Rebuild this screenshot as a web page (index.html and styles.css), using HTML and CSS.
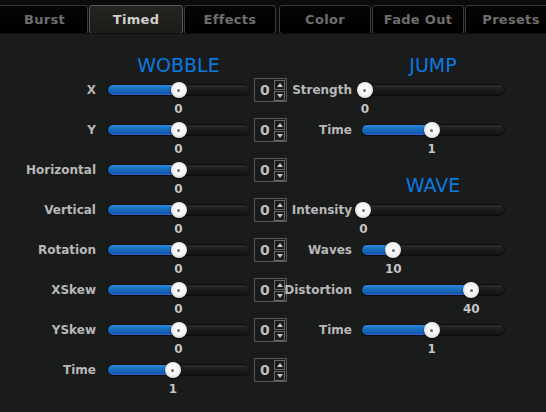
FILE: index.html
```html
<!DOCTYPE html>
<html lang="en">
<head>
  <meta charset="UTF-8" />
  <title>Timed</title>
  <link rel="stylesheet" href="styles.css">
</head>
<body>
  <div class="tabs">
    <div class="tab first">Burst</div>
    <div class="tab active">Timed</div>
    <div class="tab">Effects</div>
    <div class="tab">Color</div>
    <div class="tab">Fade Out</div>
    <div class="tab">Presets</div>
  </div>

  <div class="panel">
    <div class="col left">
      <h2 class="head">WOBBLE</h2>
      <div class="row">
        <span class="label">X</span>
        <div class="slider"><div class="fill" style="width:50%"></div><div class="knob" style="left:50%"></div><div class="val" style="left:50%">0</div></div>
        <div class="num"><span>0</span><div class="spin"><i class="up"></i><i class="down"></i></div></div>
      </div>
      <div class="row">
        <span class="label">Y</span>
        <div class="slider"><div class="fill" style="width:50%"></div><div class="knob" style="left:50%"></div><div class="val" style="left:50%">0</div></div>
        <div class="num"><span>0</span><div class="spin"><i class="up"></i><i class="down"></i></div></div>
      </div>
      <div class="row">
        <span class="label">Horizontal</span>
        <div class="slider"><div class="fill" style="width:50%"></div><div class="knob" style="left:50%"></div><div class="val" style="left:50%">0</div></div>
        <div class="num"><span>0</span><div class="spin"><i class="up"></i><i class="down"></i></div></div>
      </div>
      <div class="row">
        <span class="label">Vertical</span>
        <div class="slider"><div class="fill" style="width:50%"></div><div class="knob" style="left:50%"></div><div class="val" style="left:50%">0</div></div>
        <div class="num"><span>0</span><div class="spin"><i class="up"></i><i class="down"></i></div></div>
      </div>
      <div class="row">
        <span class="label">Rotation</span>
        <div class="slider"><div class="fill" style="width:50%"></div><div class="knob" style="left:50%"></div><div class="val" style="left:50%">0</div></div>
        <div class="num"><span>0</span><div class="spin"><i class="up"></i><i class="down"></i></div></div>
      </div>
      <div class="row">
        <span class="label">XSkew</span>
        <div class="slider"><div class="fill" style="width:50%"></div><div class="knob" style="left:50%"></div><div class="val" style="left:50%">0</div></div>
        <div class="num"><span>0</span><div class="spin"><i class="up"></i><i class="down"></i></div></div>
      </div>
      <div class="row">
        <span class="label">YSkew</span>
        <div class="slider"><div class="fill" style="width:50%"></div><div class="knob" style="left:50%"></div><div class="val" style="left:50%">0</div></div>
        <div class="num"><span>0</span><div class="spin"><i class="up"></i><i class="down"></i></div></div>
      </div>
      <div class="row">
        <span class="label">Time</span>
        <div class="slider"><div class="fill" style="width:46%"></div><div class="knob" style="left:46%"></div><div class="val" style="left:46%">1</div></div>
        <div class="num"><span>0</span><div class="spin"><i class="up"></i><i class="down"></i></div></div>
      </div>
    </div>

    <div class="col right">
      <h2 class="head">JUMP</h2>
      <div class="row">
        <span class="label">Strength</span>
        <div class="slider"><div class="fill" style="width:2%"></div><div class="knob" style="left:2%"></div><div class="val" style="left:2%">0</div></div>
      </div>
      <div class="row">
        <span class="label">Time</span>
        <div class="slider"><div class="fill" style="width:49%"></div><div class="knob" style="left:49%"></div><div class="val" style="left:49%">1</div></div>
      </div>

      <h2 class="head wave">WAVE</h2>
      <div class="row">
        <span class="label">Intensity</span>
        <div class="slider"><div class="fill" style="width:1%"></div><div class="knob" style="left:1%"></div><div class="val" style="left:1%">0</div></div>
      </div>
      <div class="row">
        <span class="label">Waves</span>
        <div class="slider"><div class="fill" style="width:22%"></div><div class="knob" style="left:22%"></div><div class="val" style="left:22%">10</div></div>
      </div>
      <div class="row">
        <span class="label">Distortion</span>
        <div class="slider"><div class="fill" style="width:77%"></div><div class="knob" style="left:77%"></div><div class="val" style="left:77%">40</div></div>
      </div>
      <div class="row">
        <span class="label">Time</span>
        <div class="slider"><div class="fill" style="width:49%"></div><div class="knob" style="left:49%"></div><div class="val" style="left:49%">1</div></div>
      </div>
    </div>
  </div>
</body>
</html>
```

FILE: styles.css
```css
body {
  margin: 0;
  width: 546px;
  height: 412px;
  overflow: hidden;
  background: #1a1b1b;
  font-family: "DejaVu Sans", sans-serif;
  color: #c4c4c4;
}
.tabs {
  display: flex;
  gap: 1px;
  height: 34px;
  padding-top: 5px;
  box-sizing: border-box;
  margin-left: -5px;
  background: #0c0c0c;
  border-bottom: 1px solid #0e0e0e;
  overflow: hidden;
}
.tab {
  flex: 0 0 92px;
  box-sizing: border-box;
  height: 29px;
  line-height: 27px;
  text-align: center;
  font-size: 13px;
  font-weight: bold;
  letter-spacing: 0.3px;
  color: #6e6e6e;
  background: linear-gradient(#050505, #000);
  border: 1px solid #3a3a3a;
  border-radius: 3px;
}
.tab.first {
  flex-basis: 93px;
  padding-left: 6px;
}
.tab.active {
  flex-basis: 94px;
  color: #d0d0d0;
  background: linear-gradient(#262522, #1c1b19);
  border-color: #5a5a5a;
}
.tab:nth-child(4) {
  margin-left: 2px;
}
.panel {
  display: flex;
  padding-top: 18px;
}
.col {
  display: flex;
  flex-direction: column;
}
.col.left {
  width: 288px;
}
.head {
  margin: 0;
  height: 26px;
  line-height: 26px;
  font-size: 19px;
  font-weight: normal;
  color: #0a7ae0;
  text-align: center;
}
.left .head {
  margin-left: 108px;
  width: 141px;
}
.right .head {
  margin-left: 74px;
  width: 142px;
}
.head.wave {
  margin-top: 14px;
}
.row {
  display: flex;
  align-items: center;
  height: 24px;
  margin-bottom: 16px;
}
.label {
  flex: 0 0 auto;
  display: flex;
  justify-content: flex-end;
  font-size: 12px;
  font-weight: bold;
  color: #b8b8b8;
  white-space: nowrap;
}
.left .label {
  width: 96px;
  margin-right: 12px;
}
.right .label {
  width: 64px;
  margin-right: 10px;
}
.slider {
  position: relative;
  height: 10px;
  border-radius: 5px;
  background: linear-gradient(#2e2a2b, #1b1819 60%, #141213);
  box-shadow: 0 0 0 1px #0d0c0c;
}
.left .slider {
  width: 141px;
}
.right .slider {
  width: 142px;
}
.fill {
  height: 100%;
  border-radius: 5px 0 0 5px;
  background: linear-gradient(#2a88d8, #1469b8 55%, #1458b0 85%, #4a66d8);
}
.knob {
  position: absolute;
  top: 50%;
  width: 16px;
  height: 16px;
  margin: -8px 0 0 -8px;
  border-radius: 50%;
  background: radial-gradient(circle at 50% 45%, #fff 0, #f4f4f4 45%, #cfcfcf 100%);
  box-shadow: 0 1px 2px rgba(0, 0, 0, 0.6);
}
.knob::after {
  content: "";
  position: absolute;
  left: 6.5px;
  top: 6.5px;
  width: 3px;
  height: 3px;
  border-radius: 50%;
  background: #6a6a6a;
}
.val {
  position: absolute;
  top: 16px;
  width: 30px;
  margin-left: -15px;
  text-align: center;
  line-height: 16px;
  font-size: 12px;
  font-weight: bold;
  color: #c4c4c4;
}
.num {
  display: flex;
  align-items: center;
  justify-content: space-between;
  box-sizing: border-box;
  width: 33px;
  height: 24px;
  margin-left: 5px;
  padding: 1px 1px 1px 5px;
  border: 1px solid #585858;
  font-size: 14px;
  font-weight: bold;
  color: #bdbdbd;
}
.spin {
  display: flex;
  flex-direction: column;
  gap: 1px;
}
.spin i {
  position: relative;
  display: block;
  box-sizing: border-box;
  width: 11px;
  height: 10px;
  border: 1px solid #6a6a6a;
}
.spin i::after {
  content: "";
  position: absolute;
  left: 1.5px;
  border-left: 3px solid transparent;
  border-right: 3px solid transparent;
}
.spin .up::after {
  top: 2px;
  border-bottom: 4px solid #c8c8c8;
}
.spin .down::after {
  top: 2px;
  border-top: 4px solid #c8c8c8;
}
```
